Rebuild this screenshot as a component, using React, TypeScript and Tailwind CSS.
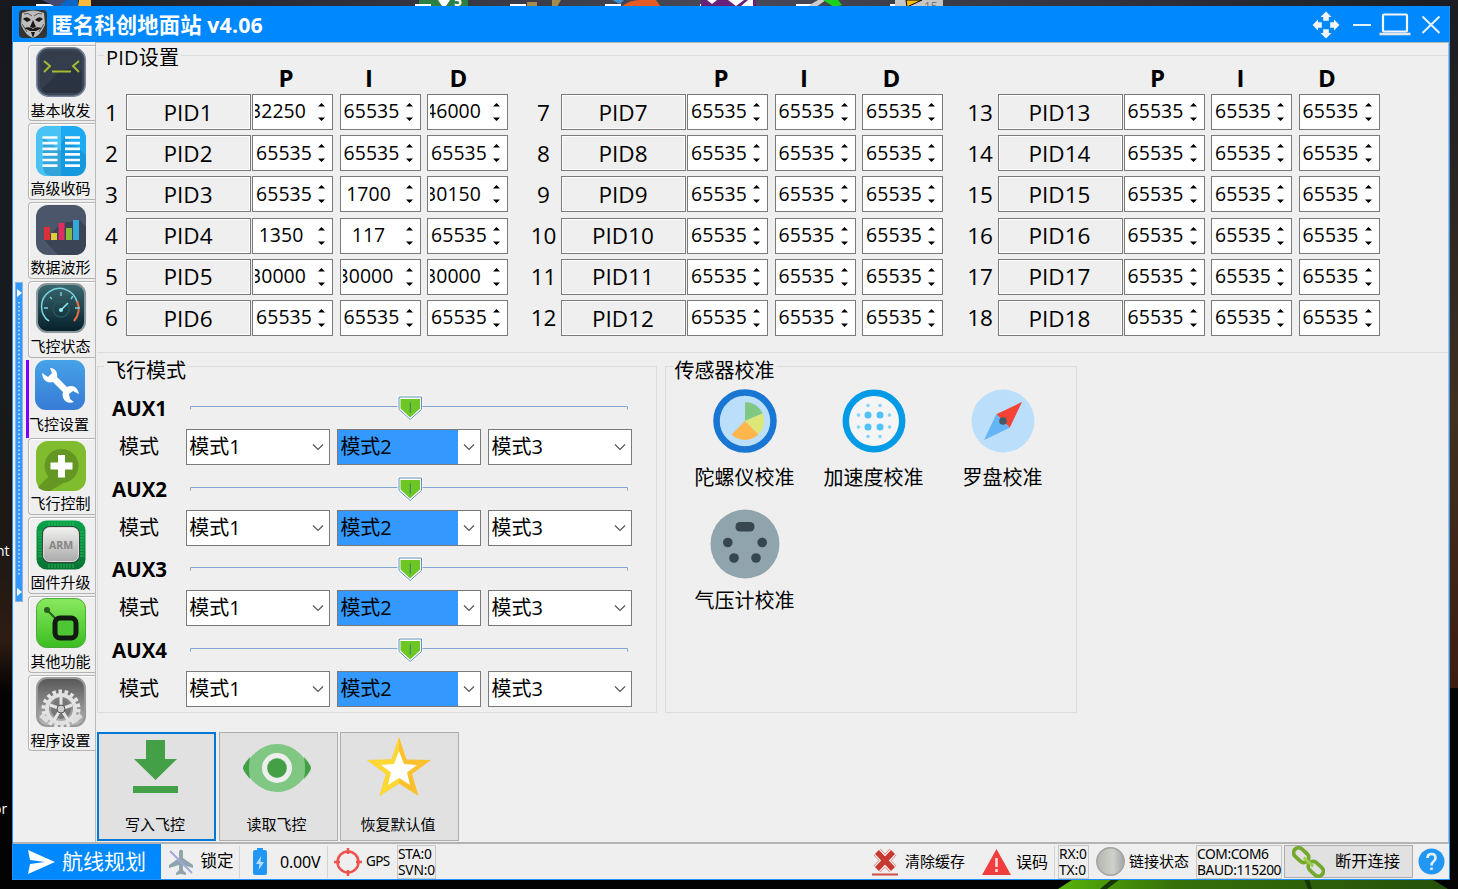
import React from "react";

const sans = "font-['Open_Sans','Noto_Sans_CJK_SC',sans-serif]";
const tahoma = "font-['Noto_Sans','Noto_Sans_CJK_SC',sans-serif]";

type Spin = string;
const M = "65535";
const pidGroups: { first: number; rows: Spin[][]; label: string; lastHead: string; offset: string }[] = [
  {
    first: 1,
    label: "w-[29px]",
    lastHead: "ml-[5px]",
    offset: "",
    rows: [
      ["32250", M, "46000"],
      [M, M, M],
      [M, "1700", "30150"],
      ["1350", "117", M],
      ["30000", "30000", "30000"],
      [M, M, M],
    ],
  },
  { first: 7, label: "w-[35px]", lastHead: "ml-[3px]", offset: "", rows: Array.from({ length: 6 }, () => [M, M, M]) },
  { first: 13, label: "w-[35px]", lastHead: "ml-[2px]", offset: "ml-[1.500px]", rows: Array.from({ length: 6 }, () => [M, M, M]) },
];

function SpinBox({ value }: { value: string }) {
  const clipped = value.length === 5 && value !== M;
  const align = clipped ? "justify-end pr-[8px]" : value.length < 5 ? "justify-center pr-[7px]" : "justify-center pr-[1px]";
  return (
    <div className="flex h-9 w-[81px] shrink-0 items-center border border-[#7a7a7a] bg-white">
      <div
        className={
          "ml-[2px] flex h-full w-[59px] items-center overflow-hidden pb-[2px] text-[19.400px] tracking-[0.1px] " + align
        }
      >
        <span>{value}</span>
      </div>
      <svg className="ml-[3px] h-5 w-[9px]" viewBox="0 0 9 20">
        <path d="M4.500 1 8 4.500H1zM4.500 19 8 15.500H1z" fill="#000" />
      </svg>
    </div>
  );
}

function PidGroup({ group }: { group: (typeof pidGroups)[number] }) {
  return (
    <div className={"flex shrink-0 flex-col " + group.offset}>
      <div className="flex h-[38px] items-end pb-[1px]">
        <div className={group.label + " shrink-0"} />
        <div className="flex pl-[118.500px] text-center text-[24px] leading-[30px] font-bold">
          <span className="w-[83px]">P</span>
          <span className="w-[83px]">I</span>
          <span className={group.lastHead + " w-[86px]"}>D</span>
        </div>
      </div>
      <div className="flex flex-col gap-[5.2px]">
        {group.rows.map((row, i) => (
          <div key={i} className="flex h-9 items-center">
            <div className={group.label + " shrink-0 pt-px text-center text-[22.500px] leading-9"}>
              {group.first + i}
            </div>
            <div className="mr-px flex h-9 w-[125px] shrink-0 items-center justify-center border border-[#7a7a7a] bg-[#efefef] pt-px pr-px text-[22.500px] shadow-[inset_0_0_0_1px_#fff]">
              PID{group.first + i}
            </div>
            <div className="flex gap-[6.500px]">
              {row.map((v, k) => (
                <SpinBox key={k} value={v} />
              ))}
            </div>
          </div>
        ))}
      </div>
    </div>
  );
}

function Combo({ text, active }: { text: string; active?: boolean }) {
  return (
    <div className="flex h-9 w-[144px] border border-[#7a7a7a] bg-white text-[20px]">
      <div className={"flex flex-1 items-center pl-[2.500px] " + (active ? "bg-[#3399ff]" : "")}>{text}</div>
      <div className="flex w-[21.500px] items-center justify-center">
        <svg className="h-3 w-3" viewBox="0 0 12 12">
          <path d="M1 3.500 6 8.500 11 3.500" fill="none" stroke="#555" strokeWidth="1.200" />
        </svg>
      </div>
    </div>
  );
}

function Slider() {
  return (
    <svg className="mt-px h-[28px] w-[440px]" viewBox="0 0 440 28">
      <path d="M1.500 15.500V12.500H438.500V15.500" fill="none" stroke="#83a6d2" />
      <path d="M208.500 1.500H233.500V16L221 27 208.500 16Z" fill="#fff" />
      <path d="M210 3H232.500V15.500L221.200 25.500 210 15.500Z" fill="#fff" stroke="#5f8fb5" />
      <path d="M211.500 5H231V14.500L221.200 23.500 211.500 14.500Z" fill="#6cc624" />
      <path d="M221.300 8.500V18.500" stroke="#3b7e7a" />
    </svg>
  );
}

const tabIcons: React.ReactNode[] = [
  <>
    <rect x=".8" y=".8" width="48.400" height="48.400" rx="12" fill="#3b4657" stroke="#77849b" strokeWidth="1.600" />
    <rect x="4" y="4" width="42" height="42" rx="8" fill="#333d4c" />
    <path d="M6 42 24 24 40 20 46 25V38Q46 46 38 46H12Q7 46 6 42Z" fill="#293341" />
    <path d="M8 14 14 19 8 25M43 14 37 19 43 25M16 24.500H35" fill="none" stroke="#a5b92e" strokeWidth="2" />
  </>,
  <>
    <rect width="50" height="50" rx="12" fill="#1cabf2" />
    <path d="M12 0H25V50H12Q0 50 0 38V12Q0 0 12 0Z" fill="#48c3f4" />
    <path d="M7 40V11L25 25V50H15Q7 49 7 40Z" fill="#32a4da" />
    <path d="M29 10 50 29V38Q50 50 38 50H25V18Z" fill="#1499df" />
    <path d="M6.500 11.500H21.500M6.500 17.200H21.500M6.500 22.800H21.500M6.500 28.400H21.500M6.500 34H21.500M6.500 39.600H21.500M29 11.500H44M29 17.200H44M29 22.800H44M29 28.400H44M29 34H44M29 39.600H44" stroke="#f4fbff" strokeWidth="2.700" />
  </>,
  <>
    <rect width="50" height="50" rx="12" fill="#4c566a" />
    <path d="M8 35 26 18 44 15 50 22V38Q50 50 38 50H22Z" fill="#3b4455" />
    <path d="M8 22H14V35H8Z" fill="#dd2f3b" />
    <path d="M15 28H21V35H15Z" fill="#dfca39" />
    <path d="M22.500 18H28.500V35H22.500Z" fill="#df2d61" />
    <path d="M30 23H36V35H30Z" fill="#86bc3b" />
    <path d="M37 15H43V35H37Z" fill="#35a9dc" />
  </>,
  <>
    <rect x="1" y="1" width="48" height="48" rx="10" fill="url(#gaugeBg)" stroke="#889698" strokeWidth="2" />
    <path d="M13 38A18 18 0 1 1 41 19" fill="none" stroke="#79d5df" strokeWidth="1.500" />
    <path d="M9 35 13 38" stroke="#79d5df" strokeWidth="1.500" />
    <path d="M41 18A19 19 0 0 1 38 38" fill="none" stroke="#e86d42" strokeWidth="2.200" />
    <path d="M25 9V13M14 14 16 16M37 13 35 16M8 25H12M44 25H39" stroke="#79d5df" strokeWidth="1.400" />
    <circle cx="25" cy="26" r="8" fill="none" stroke="#245861" strokeWidth="1.500" />
    <path d="M24 28 32 20" stroke="#8cecf1" strokeWidth="1.600" />
    <circle cx="25" cy="27" r="2" fill="#8cecf1" />
  </>,
  <>
    <rect width="50" height="50" rx="11" fill="url(#wrenchBg)" />
    <path d="M15 8C20 8 23 12 22 17L32 27C38 24 43 28 44 34L38 31 34 34 35 39 39 42C32 45 26 39 28 32L18 22C12 24 7 19 7 13L13 17 17 13Z" fill="#fff" />
  </>,
  <>
    <rect width="50" height="50" rx="12" fill="#80bd2e" />
    <path d="M12 36 2 46Q5 50 12 50H14L36 37Z" fill="#659722" />
    <circle cx="25.500" cy="25" r="17" fill="#649623" />
    <path d="M22 14H29V21.500H36.500V28.500H29V36.500H22V28.500H14.500V21.500H22Z" fill="#fff" />
  </>,
  <>
    <rect x=".5" y=".5" width="49" height="49" rx="10" fill="url(#pcb)" />
    <path d="M2 12H6M2 15H6M2 18H6M2 21H6M2 24H6M2 27H6M2 30H6M2 33H6M2 36H6M44 12H48M44 15H48M44 18H48M44 21H48M44 24H48M44 27H48M44 30H48M44 33H48M44 36H48M13 2V6M16 2V6M19 2V6M22 2V6M25 2V6M28 2V6M31 2V6M34 2V6M37 2V6M13 44V48M16 44V48M19 44V48M22 44V48M25 44V48M28 44V48M31 44V48M34 44V48M37 44V48" stroke="#31b755" strokeWidth=".9" />
    <rect x="6" y="6" width="38" height="37" rx="8" fill="#35443a" />
    <rect x="7.500" y="7.500" width="35" height="34" rx="6" fill="url(#chip)" stroke="#ddd" />
    <text x="25" y="28.500" textAnchor="middle" fill="#858585" className="text-[10.500px] font-bold">ARM</text>
  </>,
  <>
    <rect x=".5" y=".5" width="49" height="49" rx="10" fill="url(#lime)" stroke="#4aa83a" />
    <path d="M11 12 20 21" stroke="#285f20" strokeWidth="2" />
    <circle cx="11" cy="12" r="3" fill="#285f20" />
    <rect x="19" y="20" width="21" height="20" rx="5" fill="#4dc633" stroke="#111b12" strokeWidth="5" />
  </>,
  <>
    <rect x="1" y="1" width="48" height="48" rx="10" fill="url(#steel)" stroke="#999" strokeWidth="2" />
    <circle cx="25" cy="32" r="17" fill="none" stroke="#e4e4e4" strokeWidth="5" strokeDasharray="3.400 2.535" />
    <circle cx="25" cy="32" r="14" fill="none" stroke="#e1e1e1" strokeWidth="4" />
    <circle cx="25" cy="32" r="10" fill="#777" />
    <path d="M25 32V20M25 32 36 28M25 32 32 43M25 32 18 43M25 32 14 28" stroke="#e5e5e5" strokeWidth="3" />
    <circle cx="25" cy="32" r="4" fill="#ccc" stroke="#555" />
    <path d="M5 38 12 44M45 38 38 44" stroke="#ddd" strokeWidth="5" />
  </>,
];
const tabNames = ["基本收发", "高级收码", "数据波形", "飞控状态", "飞控设置", "飞行控制", "固件升级", "其他功能", "程序设置"];

function Gradients() {
  const stops: [string, string, string][] = [
    ["gaugeBg", "#3b6870", "#061f29"],
    ["wrenchBg", "#46a2e8", "#377bd5"],
    ["pcb", "#06a44b", "#087333"],
    ["chip", "#f1f1ef", "#aaa"],
    ["lime", "#8aea5f", "#39bd20"],
    ["steel", "#565656", "#b7b7b7"],
  ];
  return (
    <svg className="absolute h-0 w-0">
      <defs>
        {stops.map(([id, a, b]) => (
          <linearGradient key={id} id={id} x2="0" y2="1">
            <stop stopColor={a} />
            <stop offset="1" stopColor={b} />
          </linearGradient>
        ))}
      </defs>
    </svg>
  );
}

function Sidebar() {
  return (
    <div className="flex w-[82px] shrink-0">
      <div className="ml-[2px] mt-[240px] flex h-[320px] w-[8px] flex-col items-center justify-between border border-[#8cb4dc] bg-[#3399ff] py-[5px]">
        <svg className="h-[309px] w-[6px]" viewBox="0 0 6 309">
          <path d="M1 1 6 5 1 9ZM1 301 6 305 1 309Z" fill="#fff" />
          <path d="M3 14V290" stroke="#d9ecff" strokeWidth="1.500" strokeDasharray="1.500 2.500" />
        </svg>
      </div>
      <div className="ml-[3px] flex flex-1 flex-col pt-[2.500px]">
        {tabNames.map((name, i) => {
          const active = i === 4;
          return (
            <div
              key={name}
              className={
                "flex h-[78.750px] shrink-0 " + (active ? "border-l-[3px] border-[#8000ff]" : "pl-[1.500px] pb-[2px]")
              }
            >
              <div
                className={
                  "flex flex-1 flex-col items-center " +
                  (active ? "pr-[5px]" : "rounded-l-[4px] border border-r-0 border-[#b4b4b4] pt-[1.500px] pr-[1.500px] shadow-[inset_1px_1px_0_#fff]")
                }
              >
                <svg className="h-[50px] w-[50px] shrink-0" viewBox="0 0 50 50">{tabIcons[i]}</svg>
                <span className={"mr-[1.500px] text-[15px] leading-[22px] whitespace-nowrap " + (active ? "mt-[3px]" : "mt-[1.500px]")}>{name}</span>
              </div>
            </div>
          );
        })}
      </div>
    </div>
  );
}

function FlightModes() {
  return (
    <div className="flex h-[347px] w-[560px] flex-col border border-[#dcdcdc]">
      <div className="-mt-[11px] ml-[6px] w-fit bg-[#efefef] px-[2px] text-[20px] leading-[29px]">飞行模式</div>
      <div className="-mt-px flex flex-col">
        {[1, 2, 3, 4].map((n) => (
          <div key={n} className="flex h-[80.700px] flex-col pl-[14px]">
            <div className="flex h-[38px] pt-[9px]">
              <span className="w-[76.500px] text-[20.500px] leading-[30px] font-bold">AUX{n}</span>
              <Slider />
            </div>
            <div className="mt-[7px] flex">
              <span className="w-[73.700px] shrink-0 pl-[7px] text-[20px] leading-[36px]">模式</span>
              <div className="flex gap-[7.200px]">
                <Combo text="模式1" />
                <Combo text="模式2" active />
                <Combo text="模式3" />
              </div>
            </div>
          </div>
        ))}
      </div>
    </div>
  );
}

function SensorCell({ name, children }: { name: string; children: React.ReactNode }) {
  return (
    <div className="flex w-[129px] flex-col items-center">
      <svg className="h-[76px] w-[76px]" viewBox="-38 -38 76 76">{children}</svg>
      <span className="mt-[5px] text-[20px] leading-[28px]">{name}</span>
    </div>
  );
}

function Sensors() {
  return (
    <div className="flex h-[347px] w-[412px] flex-col border border-[#dcdcdc]">
      <div className="-mt-[11px] ml-[6.500px] w-fit bg-[#efefef] px-[2px] text-[20px] leading-[29px]">传感器校准</div>
      <div className="-mt-[2px] ml-[14px] flex">
        <SensorCell name="陀螺仪校准">
          <circle r="28.500" fill="#bbdefb" stroke="#1976d2" strokeWidth="6.500" />
          <path d="M0 0V-19A19 19 0 0 1 17.500 -7.500Z" fill="#81c784" />
          <path d="M0 0 17.500-7.500A19 19 0 0 1 13.400 13.400Z" fill="#dce775" />
          <path d="M0 0 13.400 13.400A19 19 0 0 1-13.400 13.400Z" fill="#ffb74d" />
        </SensorCell>
        <SensorCell name="加速度校准">
          <circle r="28.200" fill="#f5f5f5" stroke="#039be5" strokeWidth="6.500" />
          {[[-6, -6], [6, -6], [-6, 6], [6, 6]].map(([x, y]) => (
            <circle key={`${x}${y}`} cx={x} cy={y} r="3.500" fill="#4fc3f7" />
          ))}
          {[[-6, -15.500], [6, -15.500], [-6, 15.500], [6, 15.500], [-15.500, -6], [-15.500, 6], [15.500, -6], [15.500, 6]].map(([x, y]) => (
            <circle key={`${x}${y}`} cx={x} cy={y} r="1.800" fill="#81d4fa" />
          ))}
        </SensorCell>
        <SensorCell name="罗盘校准">
          <circle r="31.500" fill="#bbdefb" />
          <path d="M19-19 6.700 6.700-6.700-6.700Z" fill="#f44336" />
          <path d="M-19 19-6.700-6.700 6.700 6.700Z" fill="#64b5f6" />
          <circle r="3.800" fill="#455a64" />
        </SensorCell>
      </div>
      <div className="mt-[14px] ml-[14px] flex">
        <SensorCell name="气压计校准">
          <circle r="34.500" fill="#90a4ae" />
          <rect x="-9.500" y="-22" width="19" height="9.500" rx="4.500" fill="#37474f" />
          <g fill="#37474f">
            <circle cx="-17.200" cy="-1.500" r="4.800" />
            <circle cx="17.200" cy="-1.500" r="4.800" />
            <circle cx="-11" cy="14" r="4.800" />
            <circle cx="11" cy="14" r="4.800" />
          </g>
        </SensorCell>
      </div>
    </div>
  );
}

function Action({ name, primary, children }: { name: string; primary?: boolean; children: React.ReactNode }) {
  return (
    <div
      className={
        "flex h-[109px] w-[119px] flex-col items-center bg-[#e1e1e1] " +
        (primary ? "border-2 border-[#0078d7]" : "border border-[#adadad] p-px")
      }
    >
      <svg className="mr-[1.500px] h-[76px] w-[76px]" viewBox="0 0 76 76">{children}</svg>
      <span className="mt-[3px] mr-[3px] text-[15px] leading-[22px]">{name}</span>
    </div>
  );
}

function Divider() {
  return <div className="h-[32px] w-px shrink-0 self-center bg-[#d4d4d4]" />;
}

function Pair({ a, b, width }: { a: string; b: string; width: string }) {
  return (
    <div className={`${width} flex h-[34px] shrink-0 flex-col border border-[#c8c8c8] text-[13.800px] leading-[16px] whitespace-nowrap ${tahoma}`}>
      <span>{a}</span>
      <span>{b}</span>
    </div>
  );
}

function StatusBar() {
  return (
    <div className="flex h-[35px] shrink-0 items-center">
      <div className="flex h-[35px] w-[148px] items-center bg-[#0088ff] pl-[15px] text-white">
        <svg className="h-[24px] w-[28px]" viewBox="0 0 28 24">
          <path d="M0 0 27 12 0 24 2 14 17 12 2 10Z" fill="#fff" />
        </svg>
        <span className="ml-[6px] pb-px text-[21px] leading-[30px] whitespace-nowrap">航线规划</span>
      </div>
      <svg className="ml-[7px] h-[26px] w-[26px]" viewBox="0 0 26 26">
        <path d="M11 2Q13-1 15 2V9L25 16V19L15 16V21L18 24V26L13 25 8 26V24L11 21V16L1 19V16L11 9Z" fill="#90a4ae" />
        <path d="M2 2 24 24" stroke="#9fa8da" strokeWidth="2" />
      </svg>
      <span className="ml-[6.500px] w-[33.500px] text-[16.500px] whitespace-nowrap">锁定</span>
      <span className="ml-[5px] flex"><Divider /></span>
      <svg className="ml-[13px] h-[27px] w-[14px] shrink-0" viewBox="0 0 14 27">
        <path d="M4 0H10V2H12Q14 2 14 4V25Q14 27 12 27H2Q0 27 0 25V4Q0 2 2 2H4Z" fill="#2196f3" />
        <path d="M8 8 3 16H6.500L5.500 22 11 14H7.500Z" fill="#bbdefb" />
      </svg>
      <span className={`ml-[13px] w-[43px] text-[16px] tracking-[-0.2px] whitespace-nowrap ${tahoma}`}>0.00V</span>
      <span className="ml-[4px] flex"><Divider /></span>
      <svg className="ml-[6px] h-[28px] w-[28px] shrink-0" viewBox="0 0 28 28">
        <circle cx="14" cy="14" r="10.500" fill="none" stroke="#ef5350" strokeWidth="2.500" />
        <path d="M14 0V6M14 22V28M0 14H6M22 14H28" stroke="#ef5350" strokeWidth="2.500" />
      </svg>
      <span className={`ml-[4px] w-[31px] text-[13.500px] tracking-[-0.6px] ${tahoma}`}>GPS</span>
      <Pair a="STA:0" b="SVN:0" width="w-[39px] tracking-[-0.2px]" />
      <div className="flex-1" />
      <svg className="h-[28px] w-[28px] shrink-0" viewBox="0 0 28 28">
        <path d="M6 4 22 21M22 4 6 21" stroke="#dd857d" strokeWidth="9.500" />
        <path d="M6 4 22 21M22 4 6 21" stroke="#fff" strokeWidth="7.800" />
        <path d="M6 4 22 21M22 4 6 21" stroke="#c73a32" strokeWidth="5.500" />
        <path d="M1 26.500H27" stroke="#cf4c42" strokeWidth="2" />
      </svg>
      <span className="ml-[6px] w-[61px] text-[15px] whitespace-nowrap">清除缓存</span>
      <svg className="ml-[16px] h-[26px] w-[29px] shrink-0" viewBox="0 0 29 26">
        <path d="M14.500 0 29 26H0Z" fill="#f03e3e" />
        <path d="M14.500 9V18M14.500 20V23" stroke="#ffdede" strokeWidth="2.500" />
      </svg>
      <span className="ml-[5px] w-[32px] text-[16px] whitespace-nowrap">误码</span>
      <span className="ml-[6px] flex"><Divider /></span>
      <span className="ml-[3px] flex"><Pair a="RX:0" b="TX:0" width="w-[31px] tracking-[-0.1px]" /></span>
      <svg className="ml-[7px] h-[29px] w-[29px] shrink-0" viewBox="0 0 29 29">
        <defs>
          <linearGradient id="lamp">
            <stop stopColor="#b3b5b0" />
            <stop offset=".6" stopColor="#ced0ca" />
            <stop offset="1" stopColor="#a5a5a5" />
          </linearGradient>
        </defs>
        <circle cx="14.500" cy="14.500" r="13.700" fill="url(#lamp)" stroke="#a3a3a3" strokeWidth="1.500" />
      </svg>
      <span className="ml-[4px] w-[61px] text-[15px] whitespace-nowrap">链接状态</span>
      <span className="ml-[6px] flex"><Pair a="COM:COM6" b="BAUD:115200" width="w-[86px] tracking-[-0.45px]" /></span>
      <div className="ml-[2px] flex h-[33px] w-[129px] shrink-0 items-center border border-[#adadad] bg-[#e1e1e1]">
        <svg className="ml-[7px] h-[32px] w-[33px]" viewBox="0 0 33 32">
          <g transform="rotate(43 16.500 16)" fill="none" stroke="#76a82f" strokeWidth="3.800">
            <rect x="-2" y="11" width="17" height="10" rx="5" />
            <rect x="18" y="11" width="17" height="10" rx="5" />
            <path d="M10 16H23" stroke="#9ccc50" strokeWidth="3" />
          </g>
        </svg>
        <span className="ml-[10px] text-[16.300px] whitespace-nowrap">断开连接</span>
      </div>
      <svg className="mr-[4px] ml-[5px] h-[27px] w-[27px] shrink-0" viewBox="0 0 27 27">
        <circle cx="13.500" cy="13.500" r="13" fill="#2196f3" />
        <path d="M9.500 10Q9.500 6 13.500 6 17.500 6 17.500 10 17.500 12 15.500 13.500 13.500 15 13.500 17.500M13.500 19.500V22" fill="none" stroke="#e3f2fd" strokeWidth="2.600" />
      </svg>
    </div>
  );
}

function TitleBar() {
  return (
    <div className="flex h-[36px] shrink-0 items-center bg-[#0088ff] pl-[5.500px] text-white">
      <svg className="h-[28px] w-[28px]" viewBox="0 0 28 28">
        <rect width="28" height="28" rx="4" fill="#343434" />
        <path d="M3 3Q14-2 25 3L26 15Q21 26 14 28 7 26 2 15Z" fill="#bdbdbd" />
        <path d="M4 9Q8 5 12 10L8 12ZM16 10Q20 5 24 9L20 12ZM14 10 11 17 14 18 17 17ZM5 18Q11 16 14 19 17 16 23 18L17 21H11ZM12 22H16L14 28Z" fill="#191919" />
        <path d="M5 4Q9 2 13 6M15 6Q19 2 23 4M3 14 8 22M25 14 20 22" fill="none" stroke="#555" />
      </svg>
      <span className="ml-[5px] pt-px text-[21.300px] leading-[30px] font-bold tracking-[0.15px] whitespace-nowrap">匿名科创地面站 v4.06</span>
      <div className="ml-auto flex items-center pt-px pr-[8px]">
        <svg className="h-[28px] w-[28px]" viewBox="0 0 28 28">
          <g fill="#f5f5f5">
            {[0, 90, 180, 270].map((a) => (
              <path key={a} transform={`rotate(${a} 14 14)`} d="M14 .5 19.500 6H16.800V9.800H11.200V6H8.500Z" />
            ))}
          </g>
        </svg>
        <svg className="ml-[12px] h-[20px] w-[20px]" viewBox="0 0 20 20">
          <path d="M1 10H19" stroke="#e4f1ff" strokeWidth="2" />
        </svg>
        <svg className="ml-[7px] h-[24px] w-[32px]" viewBox="0 0 32 24">
          <rect x="4" y="1.500" width="24" height="17" rx="1" fill="none" stroke="#f5f5f5" strokeWidth="2.200" />
          <path d="M.5 21H31.500" stroke="#e6e6e6" strokeWidth="2.600" />
        </svg>
        <svg className="ml-[10px] h-[20px] w-[20px]" viewBox="0 0 20 20">
          <path d="M1.500 1.500 18.500 18M18.500 1.500 1.500 18" stroke="#e8f3ff" strokeWidth="2" />
        </svg>
      </div>
    </div>
  );
}

function Desktop() {
  return (
    <div className="absolute inset-0 overflow-hidden bg-black">
      <svg className="absolute inset-0 h-full w-full" viewBox="0 0 1458 889">
        <defs>
          <linearGradient id="sky" x2="0" y2="1">
            <stop stopColor="#17191e" />
            <stop offset=".4" stopColor="#171a1e" />
            <stop offset=".6" stopColor="#1b1714" />
            <stop offset=".72" stopColor="#2e1c12" />
            <stop offset=".78" stopColor="#030303" />
          </linearGradient>
          <linearGradient id="top">
            <stop stopColor="#17191e" />
            <stop offset=".5" stopColor="#494959" />
            <stop offset="1" stopColor="#1a1c22" />
          </linearGradient>
          <linearGradient id="leaf">
            <stop stopColor="#58b30b" />
            <stop offset=".3" stopColor="#357009" />
            <stop offset="1" stopColor="#25500a" />
          </linearGradient>
          <linearGradient id="dusk" x2="0" y2="1">
            <stop stopColor="#1a1c22" />
            <stop offset=".6" stopColor="#40301f" />
            <stop offset="1" stopColor="#3d1c10" />
          </linearGradient>
        </defs>
        <rect width="1458" height="889" fill="url(#sky)" />
        <rect width="1458" height="8" fill="url(#top)" />
        <rect x="1448" y="8" width="10" height="680" fill="url(#dusk)" />
        <rect x="1448" y="688" width="10" height="201" fill="#050505" />
        <path d="M1058 889 1075 878H1430L1448 889Z" fill="url(#leaf)" />
        <path d="M1100 889 1112 879H1120L1107 889ZM1304 879H1309L1312 889H1308Z" fill="#143705" />
        <path d="M36 4H62V7H36Z" fill="#fff" />
        <path d="M42 0H66V6H54Z" fill="#444a70" />
        <path d="M66 0H78V7H58Z" fill="#0c65c4" />
        <path d="M79 0H91V7H78Z" fill="#ffb93b" />
        <path d="M419 0H468V7H419Z" fill="#2d8044" />
        <path d="M438 0H450L446 6H442ZM415 4H431V7H415ZM510 4H526V7H510ZM605 4H621V7H605ZM700 4H716V7H700ZM796 4H812V7H796ZM890 4H906V7H890Z" fill="#fff" />
        <path d="M527 2H537V7H527ZM552 0H561L557 7H552Z" fill="#a58a50" />
        <path d="M612 0H624L620 4Z" fill="#3c91d4" />
        <path d="M622 6Q630 0 640 0H656L661 7Z" fill="#e65b24" />
        <path d="M701 0H756V7H701Z" fill="#68207a" />
        <path d="M707 0H717L712 4ZM728 0H744L736 6ZM748 0H753V7H740Z" fill="#fff" />
        <path d="M808 6 818 0H826L816 7Z" fill="#ccc" />
        <path d="M823 0H838L842 5 834 7Z" fill="#1ed01e" />
        <path d="M895 0H943V7H895Z" fill="#c6c6c6" />
        <path d="M906 0H922L907 7Z" fill="#ffbb0c" stroke="#000" />
        <text x="454" y="6" fill="#fff" className="text-[14px] font-bold">5</text>
        <text x="924" y="11" fill="#777" className="text-[12px]">15</text>
      </svg>
      <span className="absolute top-[542px] left-[-4px] text-[14px] leading-[18px] text-white">nt</span>
      <span className="absolute top-[800px] left-[-7px] text-[14px] leading-[18px] text-white">or</span>
    </div>
  );
}

export default function App() {
  return (
    <div className={`relative h-[889px] w-[1458px] overflow-hidden pt-[6px] pl-[12px] text-black ${sans}`}>
      <Desktop />
      <Gradients />
      <div className="relative flex h-[874px] w-[1438px] flex-col border border-t-0 border-[#2290ff] bg-[#efefef]">
        <TitleBar />
        <div className="flex h-[802px] shrink-0 border-b-2 border-[#b4b4b4]">
          <Sidebar />
          <div className="flex flex-1 flex-col border-t border-r border-l border-[#b9b9b9] pl-px">
            <div className="mt-[12px] flex h-[298px] flex-col border-y border-[#dcdcdc]">
              <div className="-mt-[13px] ml-[7px] h-[28px] w-fit bg-[#efefef] px-[2px] text-[20px] leading-[30px] tracking-[0.2px]">PID设置</div>
              <div className="-mt-[15px] flex gap-[18px]">
                {pidGroups.map((g) => (
                  <PidGroup key={g.first} group={g} />
                ))}
              </div>
            </div>
            <div className="mt-[13px] flex gap-[8px]">
              <FlightModes />
              <Sensors />
            </div>
            <div className="mt-[19px] flex gap-[2.500px]">
              <Action name="写入飞控" primary>
                <path d="M28 6H47V25H59L37.500 46 16 25H28ZM15 52H60V59H15Z" fill="#43a047" />
              </Action>
              <Action name="读取飞控">
                <path d="M4 34Q18 10 38 10 58 10 72 34 58 58 38 58 18 58 4 34Z" fill="#81c784" />
                <path d="M11 23Q4 31 4 34 4 37 11 45 9 34 11 23ZM65 23Q72 31 72 34 72 37 65 45 67 34 65 23Z" fill="#43a047" />
                <circle cx="38" cy="34" r="12.500" fill="#81c784" stroke="#eee" strokeWidth="5" />
                <circle cx="38" cy="34" r="9.500" fill="#43a047" />
              </Action>
              <Action name="恢复默认值">
                <path d="M38 3 45.500 25.500 70 26 51 40 57.500 62 38 49.500 18.500 62 25 40 6 26 30.500 25.500Z" fill="#fbc02d" />
                <path d="M38 3V49.500L18.500 62 25 40 6 26 30.500 25.500Z" fill="#fdd835" />
                <path d="M38 17 43 30 56 31 46 38.500 49 51 38 44 27 51 30 38.500 20 31 33 30Z" fill="#fff" />
              </Action>
            </div>
          </div>
        </div>
        <StatusBar />
      </div>
    </div>
  );
}
